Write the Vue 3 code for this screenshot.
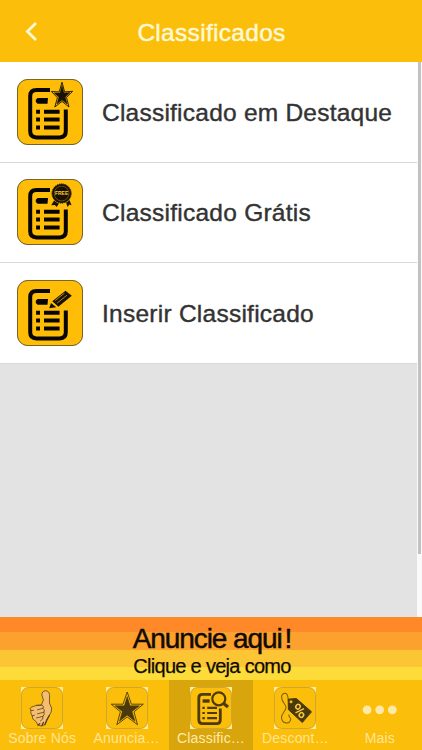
<script setup>
const rows = [
  { label: 'Classificado em Destaque', badge: 'star', cls: 'featured' },
  { label: 'Classificado Grátis', badge: 'free', cls: 'gratis' },
  { label: 'Inserir Classificado', badge: 'pencil', cls: 'insert' },
]
const tabs = [
  { label: 'Sobre Nós', icon: 'thumb' },
  { label: 'Anuncia…', icon: 'bigstar' },
  { label: 'Classific…', icon: 'search', active: true },
  { label: 'Descont…', icon: 'tag' },
  { label: 'Mais', icon: 'more' },
]
</script>

<template>
  <div class="screen">
    <svg class="defs" width="0" height="0">
      <symbol id="doc" viewBox="0 0 66 66">
        <path d="M33 11H19.5Q13.2 11 13.2 17.2V52.3Q13.2 58.4 19.5 58.4H42.7Q48.8 58.4 48.8 52.3V30.5" fill="none" stroke="#080600" stroke-width="4" />
        <path d="M20.6 19H31L30.5 24.7H20.6L18.8 23V20.7Z" fill="#080600" />
        <path d="M19.1 30.8H23v3.9h-3.9zM19.1 38.6H23v3.9h-3.9zM19.1 46.5H23v3.9h-3.9zM27 30.8h15.6v3.9H27zM27 38.6h15.6v3.9H27zM27 46.5h15.6v3.9H27z" fill="#080600" />
      </symbol>
    </svg>

    <header class="header">
      <svg class="back" width="14" height="22" viewBox="0 0 14 22"><path d="M12 2L3.4 10.5L12 19" fill="none" stroke="#fff8d5" stroke-width="2.8" /></svg>
      <h1 class="title"><span>Classificados</span></h1>
    </header>

    <main class="content">
      <div class="list">
        <div v-for="r in rows" :key="r.badge" class="row">
          <svg class="row-icon" viewBox="0 0 66 66">
            <rect x=".4" y=".4" width="65.2" height="65.2" rx="10.5" fill="#ffbd08" stroke="#594911" stroke-width=".9" />
            <use href="#doc" width="66" height="66" />
            <g v-if="r.badge === 'star'">
              <path d="M45 3.2L47.6 12.9L55.6 12.3L49.5 18.4L52 28L45 22.4L37.8 28L40.4 18.7L34.4 12.5L42.2 12.9Z" fill="#ffbd08" stroke="#171204" stroke-width=".9" />
              <path d="M45 6.5L47 14L53 13.6L48.2 18.3L50.2 25L45 21.1L39.9 25L41.9 18.3L37.2 13.9L43 14Z" fill="#171204" stroke="#171204" stroke-width=".5" />
            </g>
            <g v-else-if="r.badge === 'free'">
              <path d="M38 20L34.2 26.3L37.8 26L39.7 28L43.6 22ZM48.5 22L50.6 28L52.4 25.6L54.6 26.3L51.5 19Z" fill="#171204" />
              <circle cx="44.6" cy="14.5" r="10" fill="#171204" stroke="#ffbd08" stroke-width=".8" />
              <circle cx="44.6" cy="14.5" r="9.5" fill="none" stroke="#171204" stroke-width="1" stroke-dasharray="1.2 1" />
              <circle cx="44.6" cy="14.5" r="7.4" fill="none" stroke="#b58a0d" stroke-width=".5" />
              <rect x="38" y="11.6" width="13.2" height="5.4" fill="#171204" />
              <text x="44.6" y="16.1" class="free" text-anchor="middle">FREE</text>
            </g>
            <g v-else>
              <path d="M35.3 21.2L48.5 10.8L54.8 15.8L41.3 26.7Z" fill="#171204" />
              <path d="M34 23L39.3 27.3L32.2 28.2Z" fill="#171204" />
              <path d="M34.6 21.8L40.7 27.1M38.2 20.5L47.4 13.2M40.2 23L49.8 15.3" fill="none" stroke="#ffbd08" stroke-width=".7" />
            </g>
          </svg>
          <div class="row-label"><span :class="r.cls">{{ r.label }}</span></div>
        </div>
      </div>
      <div class="track"><div class="thumb"></div></div>
    </main>

    <section class="banner">
      <div class="ad-big">Anuncie aqui<span class="bang">!</span></div>
      <div class="ad-small">Clique e veja como</div>
    </section>

    <nav class="tabs">
      <div v-for="t in tabs" :key="t.icon" class="tab" :class="{ active: t.active }">
        <svg v-if="t.icon === 'more'" class="tab-icon" viewBox="0 0 42 42">
          <g fill="#ffe9aa"><circle cx="8.1" cy="22.8" r="4.4" /><circle cx="20.7" cy="22.8" r="4.4" /><circle cx="33.3" cy="22.8" r="4.4" /></g>
        </svg>
        <svg v-else class="tab-icon" viewBox="0 0 42 42">
          <rect width="42" height="42" fill="#ffec9c" />
          <rect x=".5" y=".5" width="41" height="41" rx="7" fill="#fbbe0a" stroke="#c19a24" stroke-width=".8" />
          <g v-if="t.icon === 'thumb'" stroke="#5a431c" stroke-width=".8" stroke-linejoin="round" stroke-linecap="round" fill="#f4bd70">
            <path d="M20.4 18L22.4 13L20.8 8Q21 3.8 24.5 3.8Q28.2 3.8 28.6 8.5L28.4 16L30.6 21Q31 25 28.3 28.5L25.8 33L24 37.6Q20 40.3 17 38L15 34.5L11.8 32L11.2 28.8L9.8 26L10 23.4Q8.2 21.5 10.2 20.2L15.5 18.4Z" />
            <path d="M15.5 18.4L20.4 18Q23.8 19 22 21.3L16.5 22.8M22 21.3Q24.5 22.5 23 25.2L16.5 26.8M23 25.2Q24 27.6 22 29.3L15.5 31M22 29.3Q23 32.4 19.5 34M10 23.4L12.5 23.4M11.2 28.8L13.5 28.2" fill="none" />
            <path d="M17 38L18.8 36.7M21 38.5L22.4 35.5M28.3 28.5L25.8 33L24 37.6" fill="none" stroke-width="1.4" />
          </g>
          <g v-else-if="t.icon === 'bigstar'" fill="#4a390c" stroke="#4a390c">
            <path d="M21.2 5L25.4 17.2H37.3L28 24.8L31.5 37.7L21.2 30L10.8 37.7L14.4 24.8L5.2 17.2H17Z" fill="#fbbe0a" stroke-width=".9" />
            <path d="M21.2 9.6L24.1 18.8H33.5L26 24.5L29 34.3L21.2 28.2L13.4 34.3L16.4 24.5L9 18.8H18.3Z" stroke-width=".5" />
          </g>
          <g v-else-if="t.icon === 'search'" stroke="#4d3a09" fill="none">
            <path d="M21 7.3H12.3Q8.8 7.3 8.8 11V32.8Q8.8 36.6 12.3 36.6H26.9Q30.3 36.6 30.3 32.8V21.5" stroke-width="2.8" />
            <path d="M12.6 14H19.6" stroke-width="3.4" />
            <path d="M12.4 20.8H14.8M17.2 20.8H27M12.4 26H14.8M17.2 26H27M12.4 31.2H14.8M17.2 31.2H27" stroke-width="2.2" />
            <circle cx="28.8" cy="11.8" r="6.5" stroke-width="2.2" fill="#fbbe0a" />
            <path d="M33.3 16.2L38 20" stroke-width="3.2" />
          </g>
          <g v-else>
            <path d="M17 14.5C12 16 16 7 11.3 6.2C6 6.2 7 13 10.5 17C15 22 7.8 25.5 7.5 30C7.4 36.8 15.7 38 16.7 32.7C17 30.4 14.6 30.2 14.7 27.5" stroke="#80640c" stroke-width="1.1" fill="none" />
            <path d="M14.2 12.2L22.3 11.5L37.5 24.8L28.3 35.5L14.4 22.6Z" fill="#4a390c" stroke="#4a390c" stroke-linejoin="round" />
            <circle cx="17" cy="14.7" r="1.5" fill="#fbbe0a" />
            <g stroke="#f8c842" stroke-width="1.5" fill="none">
              <ellipse cx="24" cy="19.7" rx="2.1" ry="2.4" transform="rotate(35 24 19.7)" />
              <ellipse cx="27.4" cy="28" rx="2.1" ry="2.4" transform="rotate(35 27.4 28)" />
              <path d="M30 21.6L21.5 25.8" />
            </g>
          </g>
        </svg>
        <span class="tab-label">{{ t.label }}</span>
      </div>
    </nav>
  </div>
</template>

<style>
body { margin: 0; overflow: hidden; }
</style>

<style scoped>
.screen {
  width: 422px;
  height: 750px;
  display: flex;
  flex-direction: column;
  overflow: hidden;
  background: #e3e3e3;
  font-family: "Liberation Sans", Arial, sans-serif;
}
.defs { position: absolute; }
.header {
  height: 62px;
  box-sizing: border-box;
  background: #fbbe0a;
  display: flex;
  align-items: center;
  padding: 0 24px;
  flex: none;
}
.back { margin-top: 1px; flex: none; }
.title {
  flex: 1;
  margin: 3px 13px 0 0;
  text-align: center;
  color: #fff8d5;
  font-size: 24.5px;
  line-height: 30px;
  font-weight: 400;
  letter-spacing: .3px;
  -webkit-text-stroke: .5px #fff8d5;
}
.content { height: 555px; display: flex; flex: none; }
.list { flex: 1; background: #e3e3e3; }
.row {
  height: 100.5px;
  box-sizing: border-box;
  border-bottom: 1px solid #d9d9d9;
  background: #fff;
  display: flex;
  align-items: center;
  padding-left: 17px;
}
.row-icon { width: 66px; height: 66px; flex: none; }
.row-label {
  margin: 2px 0 0 19px;
  color: #333;
  font-size: 24.5px;
  line-height: 30px;
  white-space: nowrap;
  -webkit-text-stroke: .4px #333;
}
.featured { letter-spacing: .23px; }
.gratis { letter-spacing: .25px; }
.insert { letter-spacing: .25px; }
.free { font-size: 5px; font-weight: 700; fill: #ffca31; }
.track { width: 5px; background: #fafafa; }
.thumb { width: 3px; height: 492px; margin-left: 1px; background: #c2c2c2; }
.banner {
  height: 63px;
  flex: none;
  background: linear-gradient(#ff8928 0 15px, #fda12e 15px 33px, #fcc534 33px 50px, #fddb38 50px 63px);
  color: #110b03;
  text-align: center;
  white-space: nowrap;
}
.ad-big {
  padding: 6px 0 0 2px;
  font-size: 28px;
  line-height: 32px;
  letter-spacing: -1.1px;
  -webkit-text-stroke: .5px #110b03;
}
.bang { margin-left: 3px; }
.ad-small { padding-left: 2px; font-size: 20px; line-height: 22px; letter-spacing: -.7px; -webkit-text-stroke: .25px #110b03; }
.tabs { height: 70px; display: flex; background: #fbbe0a; flex: none; }
.tab {
  flex: 1;
  display: flex;
  flex-direction: column;
  align-items: center;
  padding-top: 7px;
}
.active { background: #d9a50c; }
.tab-icon { width: 42px; height: 42px; flex: none; }
.tab-label {
  margin-top: 1px;
  color: #ffe596;
  font-size: 14px;
  line-height: 16px;
  letter-spacing: .2px;
  white-space: nowrap;
}
.active .tab-label { color: #ffebac; }
</style>
